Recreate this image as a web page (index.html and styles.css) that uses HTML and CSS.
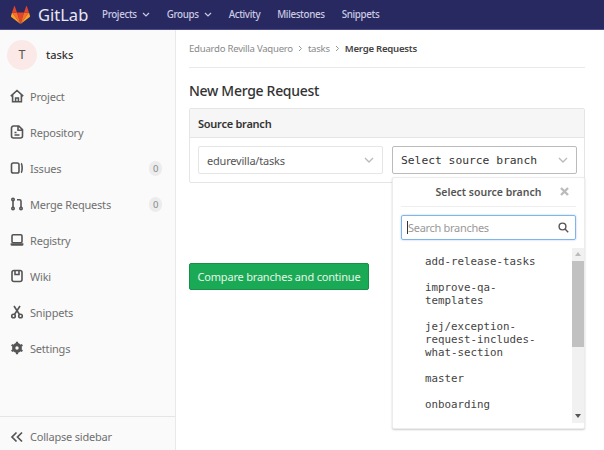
FILE: index.html
```html
<!DOCTYPE html>
<html lang="en">
	<head>
		<meta charset="utf-8">
		<title>New Merge Request</title>
		<link rel="stylesheet" href="styles.css">
	</head>
	<body>
		<header class="navbar">
			<svg class="logo" width="19" height="18" viewBox="0 0 20 18" preserveAspectRatio="none">
				<path fill="#e24329" d="M10 18 13.700 6.600H6.300z"/>
				<path fill="#fc6d26" d="M10 18 6.300 6.600H1.100z"/>
				<path fill="#fca326" d="M1.100 6.600 0 10.100c-.1.3 0 .7.3.9L10 18z"/>
				<path fill="#e24329" d="M1.100 6.600h5.200L4 .3c-.1-.3-.6-.3-.7 0z"/>
				<path fill="#fc6d26" d="M10 18l3.700-11.400h5.200z"/>
				<path fill="#fca326" d="M18.900 6.600 20 10.100c.1.3 0 .7-.3.900L10 18z"/>
				<path fill="#e24329" d="M18.900 6.600h-5.200L16 .3c.1-.3.6-.3.7 0z"/>
			</svg>
			<span class="brand">GitLab</span>
			<nav class="topnav">
				<a>Projects <svg class="caret" width="8" height="5" viewBox="0 0 8 5"><path d="M1 1l3 3 3-3"/></svg></a>
				<a>Groups <svg class="caret" width="8" height="5" viewBox="0 0 8 5"><path d="M1 1l3 3 3-3"/></svg></a>
				<a>Activity</a>
				<a>Milestones</a>
				<a>Snippets</a>
			</nav>
		</header>
		<div class="layout">
			<aside class="sidebar">
				<div class="project">
					<span class="avatar">T</span>
					<span class="project-name">tasks</span>
				</div>
				<ul class="menu">
					<li>
						<svg class="icon" viewBox="0 0 14 14"><path d="M.8 7.200 7 1.500l6.200 5.700M2.600 6v6.800h8.800V6M5.600 12.800V9h2.800v3.800"/></svg>
						Project
					</li>
					<li>
						<svg class="icon" viewBox="0 0 14 14"><path d="M3.500 1h5.300l3.700 3.700v6.300a2 2 0 0 1-2 2h-7a2 2 0 0 1-2-2V3a2 2 0 0 1 2-2zM8 1.300V5.200h4.200M4.500 7.500h2M4.500 10h5"/></svg>
						Repository
					</li>
					<li>
						<svg class="icon" viewBox="0 0 14 14"><rect x="1.500" y="2" width="7.500" height="10" rx="1.800"/><path d="M11 2.500c1.500.6 1.500 8.400 0 9"/></svg>
						Issues
						<span class="badge">0</span>
					</li>
					<li>
						<svg class="icon" viewBox="0 0 14 14"><circle cx="3" cy="2.500" r="1.200"/><circle cx="3" cy="11.500" r="1.200"/><circle cx="11" cy="11.500" r="1.200"/><path d="M3 4v6M11 10V4.200a1.500 1.500 0 0 0-1.500-1.500H7"/></svg>
						Merge Requests
						<span class="badge">0</span>
					</li>
					<li>
						<svg class="icon" viewBox="0 0 14 14"><rect x="2" y="1.800" width="10" height="8" rx="1.200"/><path class="solid" d="M.6 10.200h12.800v1.300a1.200 1.200 0 0 1-1.200 1.200H1.800a1.200 1.200 0 0 1-1.200-1.200z"/></svg>
						Registry
					</li>
					<li>
						<svg class="icon" viewBox="0 0 14 14"><rect x="2" y="1.500" width="10" height="11" rx="2"/><path d="M5 2v3.500h4V2"/></svg>
						Wiki
					</li>
					<li>
						<svg class="icon" viewBox="0 0 14 14"><circle cx="3.500" cy="11" r="1.800"/><circle cx="10.500" cy="11" r="1.800"/><path d="M4.500 9.500 10 1M9.500 9.500 4 1"/></svg>
						Snippets
					</li>
					<li>
						<svg class="icon" viewBox="0 0 14 14"><circle cx="7" cy="7" r="3.300" stroke-width="3.200"/><path stroke-width="2.200" d="M7 .8v2M7 11.200v2M1.600 3.900l1.700 1M10.700 9.100l1.700 1M1.600 10.100l1.700-1M10.700 4.900l1.700-1"/></svg>
						Settings
					</li>
				</ul>
				<div class="collapse">
					<svg class="icon" viewBox="0 0 14 14"><path stroke-width="1.700" d="M6.500 2.500 2 7l4.500 4.500M12 2.500 7.500 7l4.500 4.500"/></svg>
					Collapse sidebar
				</div>
			</aside>
			<main class="content">
				<div class="breadcrumbs">
					<span>Eduardo Revilla Vaquero</span>
					<svg class="crumb-sep" width="5" height="7" viewBox="0 0 5 7"><path d="M1 1l2.500 2.500L1 6"/></svg>
					<span>tasks</span>
					<svg class="crumb-sep" width="5" height="7" viewBox="0 0 5 7"><path d="M1 1l2.500 2.500L1 6"/></svg>
					<span class="crumb-current">Merge Requests</span>
				</div>
				<h1 class="title">New Merge Request</h1>
				<section class="panel">
					<div class="panel-heading">Source branch</div>
					<div class="panel-body">
						<div class="select">
							<span>edurevilla/tasks</span>
							<svg class="select-caret" width="10" height="6" viewBox="0 0 10 6"><path d="M1 1l4 4 4-4"/></svg>
						</div>
						<div class="select select-branch">
							<span>Select source branch</span>
							<svg class="select-caret" width="10" height="6" viewBox="0 0 10 6"><path d="M1 1l4 4 4-4"/></svg>
						</div>
					</div>
				</section>
				<button class="btn-compare">Compare branches and continue</button>
				<div class="dropdown">
					<div class="dropdown-title">
						Select source branch
						<svg class="dropdown-close" width="9" height="9" viewBox="0 0 9 9"><path d="M1 1l7 7M8 1 1 8"/></svg>
					</div>
					<div class="search">
						<span class="search-cursor"></span>
						<span class="search-text">Search branches</span>
						<svg class="search-icon" width="11" height="11" viewBox="0 0 11 11"><circle cx="4.500" cy="4.500" r="3.400"/><path d="M7 7l3.200 3.200"/></svg>
					</div>
					<div class="branches">
						<ul class="branch-list">
							<li>add-release-tasks</li>
							<li>improve-qa-<br>templates</li>
							<li>jej/exception-<br>request-includes-<br>what-section</li>
							<li>master</li>
							<li>onboarding</li>
						</ul>
						<div class="scrollbar">
							<span class="arrow-up"></span>
							<span class="thumb"></span>
							<span class="arrow-down"></span>
						</div>
					</div>
				</div>
			</main>
		</div>
	</body>
</html>
```

FILE: styles.css
```css
html, body {
	height: 100%;
}

body {
	margin: 0;
	overflow: hidden;
	display: flex;
	flex-direction: column;
	font-family: "Noto Sans", "Open Sans", sans-serif;
	font-size: 12px;
	color: #2e2e2e;
	background-color: #fff;
}

/* Top bar */

.navbar {
	flex: none;
	height: 29px;
	display: flex;
	align-items: center;
	padding-left: 11px;
	background-color: #292961;
	border-bottom: 1px solid #4c4c8a;
}

.logo {
	margin-right: 8px;
}

.brand {
	width: 64px;
	font-size: 16.5px;
	color: #e8e8f2;
}

.topnav {
	display: flex;
	gap: 17px;
	font-size: 9.8px;
	font-weight: 500;
	letter-spacing: -0.35px;
	color: #c9c9e2;
}

.topnav a {
	display: flex;
	align-items: center;
	gap: 5px;
}

.caret path {
	fill: none;
	stroke: #c9c9e2;
	stroke-width: 1.2;
}

.layout {
	flex: 1;
	display: flex;
	min-height: 0;
}

/* Sidebar */

.sidebar {
	flex: none;
	width: 175px;
	display: flex;
	flex-direction: column;
	background-color: #fafafa;
	border-right: 1px solid #e9e9e9;
}

.project {
	display: flex;
	align-items: center;
	gap: 9px;
	padding: 9px 7px 0;
	height: 31px;
}

.avatar {
	width: 30px;
	height: 30px;
	border-radius: 50%;
	display: flex;
	align-items: center;
	justify-content: center;
	font-size: 12.5px;
	color: #555;
	background-color: #fbe9e7;
}

.project-name {
	font-size: 11px;
	font-weight: 500;
	color: #333;
}

.menu {
	flex: 1;
	list-style: none;
	margin: 0;
	padding: 8px 13px 0 10px;
}

.menu li {
	height: 36px;
	display: flex;
	align-items: center;
	gap: 6px;
	font-size: 11px;
	letter-spacing: -0.2px;
	color: #707070;
}

.icon {
	flex: none;
	width: 14px;
	height: 14px;
	fill: none;
	stroke: #555;
	stroke-width: 1.6;
}

.icon .solid {
	fill: #555;
	stroke: none;
}

.badge {
	margin-left: auto;
	width: 13px;
	height: 15px;
	border-radius: 7px;
	display: flex;
	align-items: center;
	justify-content: center;
	font-size: 9.5px;
	color: #888;
	background-color: #ececec;
}

.collapse {
	box-sizing: border-box;
	height: 34px;
	display: flex;
	align-items: center;
	gap: 6px;
	padding: 6px 0 0 10px;
	font-size: 11px;
	letter-spacing: -0.2px;
	color: #707070;
	border-top: 1px solid #e5e5e5;
}

/* Main column */

.content {
	flex: 1;
	position: relative;
	padding: 0 19px 0 13px;
}

.breadcrumbs {
	height: 37px;
	display: flex;
	align-items: center;
	gap: 5px;
	font-size: 9.6px;
	letter-spacing: -0.25px;
	color: #8a8a8a;
	border-bottom: 1px solid #e9e9e9;
}

.crumb-sep path {
	fill: none;
	stroke: #999;
	stroke-width: 1;
}

.crumb-current {
	font-weight: 600;
	color: #444;
}

.title {
	margin: 14px 0 8px;
	font-size: 14px;
	line-height: 18px;
	font-weight: 500;
	letter-spacing: -0.3px;
	color: #333;
}

.panel {
	border: 1px solid #e5e5e5;
	border-radius: 2px;
}

.panel-heading {
	height: 28px;
	display: flex;
	align-items: center;
	padding-left: 8px;
	font-size: 11px;
	font-weight: 600;
	letter-spacing: -0.25px;
	color: #333;
	background-color: #f6f6f6;
	border-bottom: 1px solid #e5e5e5;
}

.panel-body {
	display: flex;
	gap: 9px;
	padding: 8px 7px 8px 8px;
}

.select {
	flex: 1;
	height: 26px;
	display: flex;
	align-items: center;
	justify-content: space-between;
	padding: 0 8px;
	font-size: 11px;
	letter-spacing: -0.2px;
	color: #555;
	background-color: #fff;
	border: 1px solid #e5e5e5;
	border-radius: 2px;
}

.select-branch {
	font-family: "DejaVu Sans Mono", monospace;
	font-size: 11.3px;
	letter-spacing: 0;
	color: #333;
	border-color: #bbb;
}

.select-caret path {
	fill: none;
	stroke: #bbb;
	stroke-width: 1.4;
}

.btn-compare {
	display: block;
	margin-top: 80px;
	width: 180px;
	height: 27px;
	padding: 0;
	font-family: inherit;
	font-size: 11px;
	letter-spacing: -0.2px;
	color: #e6f5ea;
	background-color: #1aaa55;
	border: 1px solid #168f48;
	border-radius: 2px;
}

/* Branch dropdown, drawn over the panel */

.dropdown {
	position: absolute;
	left: 216px;
	top: 147px;
	width: 193px;
	height: 252px;
	box-sizing: border-box;
	padding-left: 8px;
	background-color: #fff;
	border: 1px solid #ececec;
	border-radius: 2px;
	box-shadow: 0 1px 2px rgba(0, 0, 0, 0.2);
}

.dropdown-title {
	position: relative;
	height: 28px;
	margin-right: 8px;
	display: flex;
	align-items: center;
	justify-content: center;
	font-size: 10.5px;
	font-weight: 600;
	color: #555;
	border-bottom: 1px solid #eee;
}

.dropdown-close {
	position: absolute;
	right: 7px;
	top: 9px;
}

.dropdown-close path {
	fill: none;
	stroke: #bbb;
	stroke-width: 2.4;
}

.search {
	height: 23px;
	margin: 8px 8px 8px 0;
	display: flex;
	align-items: center;
	padding: 0 6px 0 5px;
	font-size: 11px;
	letter-spacing: -0.3px;
	color: #999;
	border: 1px solid #7fb6ea;
	border-radius: 2px;
	box-shadow: 0 0 2px rgba(31, 120, 209, 0.4);
}

.search-cursor {
	width: 1px;
	height: 13px;
	background-color: #333;
}

.search-text {
	flex: 1;
}

.search-icon {
	fill: none;
	stroke: #555;
	stroke-width: 1.4;
}

.branches {
	display: flex;
	height: 175px;
	margin-left: -8px;
}

.branch-list {
	flex: 1;
	list-style: none;
	margin: 0;
	padding: 7px 0 0 32px;
	font-family: "DejaVu Sans Mono", monospace;
	font-size: 10.8px;
	line-height: 13px;
	color: #444;
}

.branch-list li {
	margin-bottom: 13px;
}

.scrollbar {
	flex: none;
	width: 12px;
	display: flex;
	flex-direction: column;
	align-items: center;
	background-color: #f1f1f1;
}

.arrow-up,
.arrow-down {
	width: 0;
	height: 0;
	border-left: 3.5px solid transparent;
	border-right: 3.5px solid transparent;
}

.arrow-up {
	margin: 4px 0 5px;
	border-bottom: 4px solid #bbb;
}

.arrow-down {
	margin-top: auto;
	margin-bottom: 5px;
	border-top: 4px solid #555;
}

.thumb {
	width: 100%;
	height: 86px;
	background-color: #c1c1c1;
}
```
